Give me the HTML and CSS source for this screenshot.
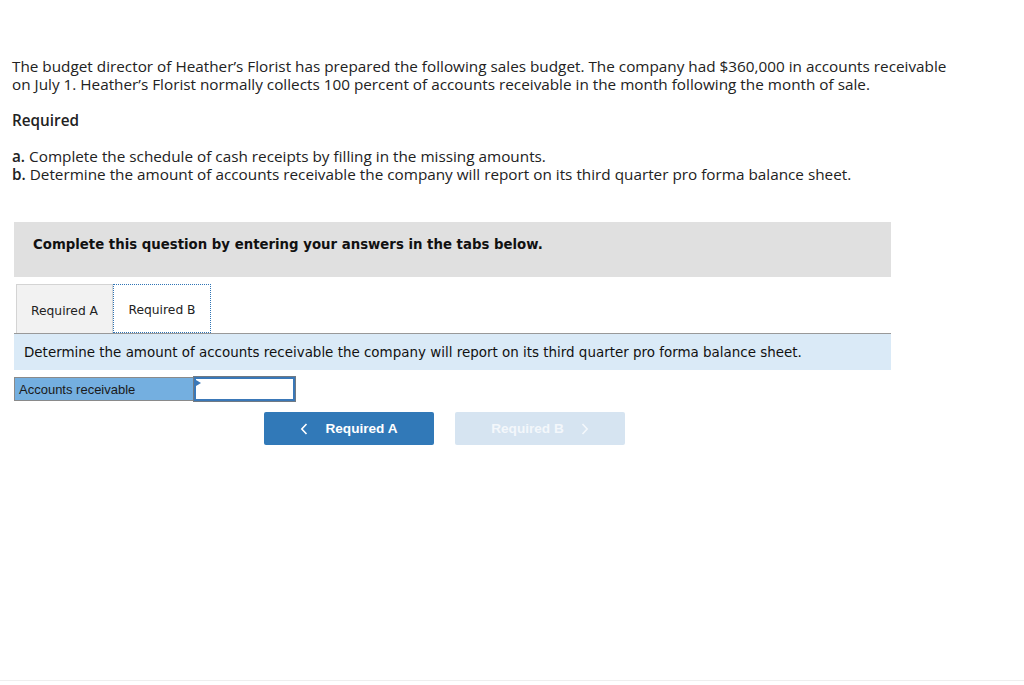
FILE: index.html
```html
<!DOCTYPE html>
<html>
<head>
<meta charset="utf-8">
<link rel="stylesheet" href="styles.css">
</head>
<body>
<div class="page">
  <div class="intro">
    <p class="para">The budget director of Heather’s Florist has prepared the following sales budget. The company had $360,000 in accounts receivable<br>on July 1. Heather’s Florist normally collects 100 percent of accounts receivable in the month following the month of sale.</p>
    <p class="req-title">Required</p>
    <p class="para"><b>a.</b> Complete the schedule of cash receipts by filling in the missing amounts.<br><b>b.</b> Determine the amount of accounts receivable the company will report on its third quarter pro forma balance sheet.</p>
  </div>
  <div class="panel">
    <div class="instr">Complete this question by entering your answers in the tabs below.</div>
    <div class="tabs">
      <div class="tab">Required A</div>
      <div class="tab active">Required B</div>
    </div>
    <div class="info">Determine the amount of accounts receivable the company will report on its third quarter pro forma balance sheet.</div>
    <div class="row">
      <div class="label">Accounts receivable</div>
      <div class="input"><span class="flag"></span></div>
    </div>
    <div class="nav">
      <div class="btn prev"><svg class="chev left" width="8" height="12" viewBox="0 0 8 12"><path d="M6.5 1 L1.8 6 L6.5 11" fill="none" stroke="#fff" stroke-width="1.6"/></svg>Required A</div>
      <div class="btn next">Required B<svg class="chev right" width="8" height="12" viewBox="0 0 8 12"><path d="M1.5 1 L6.2 6 L1.5 11" fill="none" stroke="#f3f7fb" stroke-width="1.6"/></svg></div>
    </div>
  </div>
</div>
<div class="footer-line"></div>
</body>
</html>
```
FILE: styles.css
```css
html, body {
  margin: 0;
  padding: 0;
  background: #fff;
}
.page {
  height: 680px;
  padding: 0 0 0 12px;
  box-sizing: border-box;
}
.intro {
  padding-top: 57px;
  font-family: "Open Sans", "Lato", sans-serif;
  font-size: 15.3px;
  line-height: 18px;
  color: #222;
  white-space: nowrap;
}
.para {
  margin: 0;
}
.para b {
  font-weight: 600;
}
.req-title {
  margin: 18px 0 18px;
  font-weight: 600;
}
.panel {
  margin: 39px 0 0 2px;
  width: 877px;
}
.instr {
  background: #e0e0e0;
  height: 55px;
  box-sizing: border-box;
  padding: 15px 0 0 19px;
  font-family: "DejaVu Sans", Verdana, sans-serif;
  font-weight: bold;
  font-size: 13.3px;
  color: #111;
}
.tabs {
  display: flex;
  margin-top: 7px;
  padding-left: 2px;
  border-bottom: 1px solid #999;
  height: 49px;
}
.tab {
  box-sizing: border-box;
  height: 49px;
  width: 97px;
  display: flex;
  align-items: center;
  justify-content: center;
  padding-top: 3px;
  font-family: "DejaVu Sans", Verdana, sans-serif;
  font-size: 12.3px;
  color: #222;
  background: #f2f2f2;
  border: 1px solid #d4d4d4;
  border-bottom: none;
}
.tab.active {
  background: #fff;
  width: 98px;
  border: 1px dotted #2f74b5;
}
.info {
  background: #daeaf7;
  height: 36px;
  box-sizing: border-box;
  padding: 11px 0 0 10px;
  font-family: "DejaVu Sans", Verdana, sans-serif;
  font-size: 13.45px;
  color: #111;
}
.row {
  display: flex;
  margin-top: 7px;
  height: 24px;
}
.label {
  box-sizing: border-box;
  width: 180px;
  height: 24px;
  background: #74afe0;
  border: 1px solid #8a8a8a;
  border-right: none;
  padding: 4px 0 0 4px;
  font-family: "Liberation Sans", Arial, sans-serif;
  font-size: 13px;
  color: #1a1a1a;
}
.input {
  position: relative;
  box-sizing: border-box;
  width: 101px;
  height: 24px;
  background: #fff;
  border: 2px solid #3a78b8;
  box-shadow: 0 0 0 1px #707a84;
}
.flag {
  position: absolute;
  left: 0;
  top: 1px;
  width: 0;
  height: 0;
  border-top: 3px solid transparent;
  border-bottom: 3px solid transparent;
  border-left: 5px solid #3a78b8;
}
.nav {
  display: flex;
  gap: 21px;
  margin: 11px 0 0 250px;
}
.btn {
  box-sizing: border-box;
  width: 170px;
  height: 33px;
  border-radius: 2px;
  display: flex;
  align-items: center;
  justify-content: center;
  font-family: "Liberation Sans", Arial, sans-serif;
  font-weight: bold;
  font-size: 13.6px;
  color: #fff;
}
.btn.prev {
  background: #3179b8;
}
.chev.left {
  margin-right: 17px;
}
.chev.right {
  margin-left: 17px;
}
.btn.next {
  background: #d6e4f1;
  color: #f3f7fb;
}
.footer-line {
  height: 1px;
  background: #eeeeee;
}
```
